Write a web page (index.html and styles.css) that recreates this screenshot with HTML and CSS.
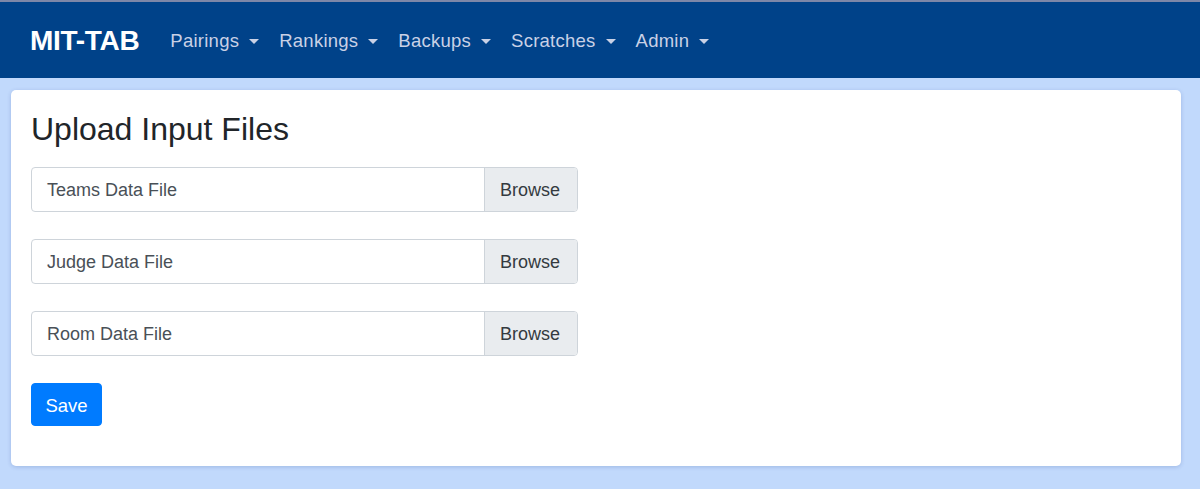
FILE: index.html
```html
<!DOCTYPE html>
<html lang="en">
<head>
<meta charset="utf-8">
<title>MIT-TAB</title>
<link rel="stylesheet" href="styles.css">
</head>
<body>
<nav class="navbar">
  <a class="brand" href="#">MIT-TAB</a>
  <ul class="nav">
    <li><a class="nav-link" href="#">Pairings<span class="caret"></span></a></li>
    <li><a class="nav-link" href="#">Rankings<span class="caret"></span></a></li>
    <li><a class="nav-link" href="#">Backups<span class="caret"></span></a></li>
    <li><a class="nav-link" href="#">Scratches<span class="caret"></span></a></li>
    <li><a class="nav-link" href="#">Admin<span class="caret"></span></a></li>
  </ul>
</nav>
<main class="page">
  <section class="card">
    <h2 class="title">Upload Input Files</h2>
    <form class="form">
      <label class="file">
        <span class="file-label">Teams Data File</span>
        <span class="file-btn">Browse</span>
      </label>
      <label class="file">
        <span class="file-label">Judge Data File</span>
        <span class="file-btn">Browse</span>
      </label>
      <label class="file">
        <span class="file-label">Room Data File</span>
        <span class="file-btn">Browse</span>
      </label>
      <div class="actions"><button type="button" class="btn-save">Save</button></div>
    </form>
  </section>
</main>
</body>
</html>
```
FILE: styles.css
```css
* { box-sizing: border-box; }
html, body { margin: 0; padding: 0; }
body {
  font-family: "Liberation Sans", Arial, sans-serif;
  background: #c1d9fc;
  color: #212529;
  height: 489px;
  overflow: hidden;
}
.navbar {
  display: flex;
  align-items: center;
  height: 78px;
  background: #004289;
  border-top: 2px solid #7d87a8;
  padding: 2px 30px 0;
}
.brand {
  color: #fff;
  font-size: 28px;
  font-weight: bold;
  text-decoration: none;
  margin-right: 21px;
  letter-spacing: -0.3px;
}
.nav {
  display: flex;
  list-style: none;
  margin: 0;
  padding: 0;
}
.nav-link {
  display: flex;
  align-items: center;
  padding: 8px 10px;
  font-size: 18.5px;
  letter-spacing: 0.25px;
  color: #c9d1e6;
  text-decoration: none;
}
.caret {
  display: inline-block;
  margin-left: 10px;
  width: 0;
  height: 0;
  border-top: 5px solid #c9d1e6;
  border-left: 5.5px solid transparent;
  border-right: 5.5px solid transparent;
  margin-top: 1px;
}
.page {
  padding: 12px 19px 23px 11px;
}
.card {
  background: #fff;
  border-radius: 5px;
  box-shadow: 0 1px 4px rgba(0, 40, 120, 0.18);
  padding: 20px 20px 40px;
  height: 376px;
}
.title {
  font-size: 32px;
  font-weight: normal;
  line-height: 38px;
  margin: 0 0 19px;
  color: #212529;
}
.form {
  display: flex;
  flex-direction: column;
  gap: 27px;
}
.file {
  display: flex;
  width: 547px;
  height: 45px;
  border: 1px solid #ced4da;
  border-radius: 4px;
  font-size: 18px;
  color: #495057;
  overflow: hidden;
}
.file-label {
  flex: 1;
  display: flex;
  align-items: center;
  padding: 1px 0 0 15px;
}
.file-btn {
  display: flex;
  align-items: center;
  padding: 1px 15px 0;
  background: #e9ecef;
  border-left: 1px solid #ced4da;
  width: 93px;
  color: #343a40;
}
.actions { display: flex; }
.btn-save {
  font-family: inherit;
  font-size: 18.5px;
  color: #fff;
  background: #007bff;
  border: 1px solid #007bff;
  border-radius: 4px;
  width: 71px;
  height: 43px;
  padding: 2px 0 0;
}
```
